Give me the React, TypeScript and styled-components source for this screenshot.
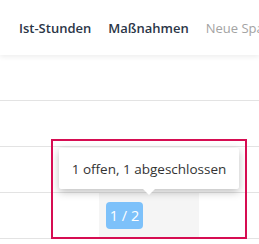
import { createGlobalStyle, styled } from "styled-components";

const GlobalStyle = createGlobalStyle`
  body {
    margin: 0;
    background: #ffffff;
    font-family: "Open Sans", "Noto Sans", sans-serif;
  }
`;

const Page = styled.div`
  position: relative;
  width: 259px;
  height: 244px;
  overflow: hidden;
`;

const Header = styled.div`
  display: flex;
  align-items: center;
  height: 55px;
  padding-left: 19px;
  box-shadow: 0 2px 5px rgba(0, 0, 0, 0.07);
  position: relative;
  z-index: 1;
`;

const Tab = styled.div<{ $muted?: boolean }>`
  margin-right: 17px;
  font-size: 13px;
  font-weight: ${(props) => (props.$muted ? 400 : 600)};
  color: ${(props) => (props.$muted ? "#a3a3a3" : "#2b3647")};
  white-space: nowrap;
`;

const Row = styled.div`
  display: flex;
  height: 45px;
  border-bottom: 1px solid #e3e3e3;
`;

const Cell = styled.div<{ $width?: string; $active?: boolean }>`
  position: relative;
  display: flex;
  align-items: center;
  width: ${(props) => props.$width || "auto"};
  flex: ${(props) => (props.$width ? "none" : "1")};
  padding-left: 7px;
  box-sizing: border-box;
  background: ${(props) => (props.$active ? "#f5f5f5" : "transparent")};
`;

const Badge = styled.span`
  display: inline-flex;
  align-items: center;
  justify-content: center;
  width: 37px;
  height: 27px;
  border-radius: 4px;
  background: #7dc1fa;
  color: #ffffff;
  font-size: 14.5px;
`;

const Tooltip = styled.div`
  position: absolute;
  left: 50%;
  bottom: calc(100% + 4px);
  transform: translateX(-50%);
  width: 180px;
  height: 41px;
  display: flex;
  align-items: center;
  justify-content: center;
  background: #ffffff;
  border-radius: 2px;
  box-shadow: 0 3px 8px rgba(0, 0, 0, 0.25);
  font-size: 13.5px;
  color: #333333;
  white-space: nowrap;
  z-index: 2;

  &::after {
    content: "";
    position: absolute;
    left: 50%;
    top: 100%;
    margin-left: -6px;
    border-left: 6px solid transparent;
    border-right: 6px solid transparent;
    border-top: 6px solid #ffffff;
  }
`;

const Highlight = styled.div`
  position: absolute;
  left: 51px;
  top: 139px;
  width: 196px;
  height: 100px;
  box-sizing: border-box;
  border: 2px solid #d60d52;
  pointer-events: none;
  z-index: 3;
`;

export default function App() {
  return (
    <>
      <GlobalStyle />
      <Page>
        <Header>
          <Tab>Ist-Stunden</Tab>
          <Tab>Maßnahmen</Tab>
          <Tab $muted>Neue Spalte</Tab>
        </Header>
        <Row />
        <Row />
        <Row />
        <Row>
          <Cell $width="99px" />
          <Cell $width="100px" $active>
            <Tooltip>1 offen, 1 abgeschlossen</Tooltip>
            <Badge>1 / 2</Badge>
          </Cell>
          <Cell />
        </Row>
        <Highlight />
      </Page>
    </>
  );
}
